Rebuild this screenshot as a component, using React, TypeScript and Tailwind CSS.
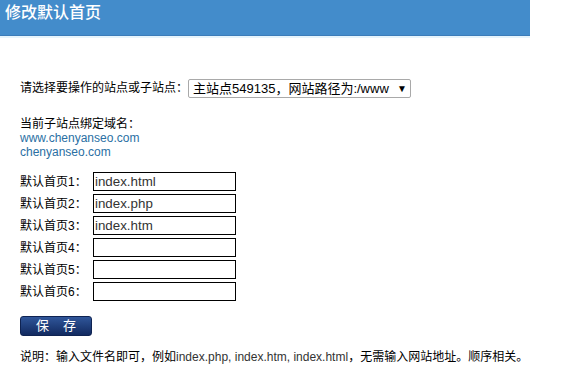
const FONT = '"Liberation Sans", Arial, "Noto Sans CJK SC", sans-serif';

const pages = ['index.html', 'index.php', 'index.htm', '', '', ''];

export default function App() {
  return (
    <div className="w-[564px] h-[385px] bg-white text-[12px] text-black" style={{ fontFamily: FONT }}>
      {/* Title bar */}
      <div className="w-[530px]">
        <div className="h-[36px] bg-[#438ccb] border-b border-[#3b7cb9] pl-[5px] pt-[3px]">
          <h1 className="text-[16px] leading-[20px] text-white font-medium">修改默认首页</h1>
        </div>
        <div className="h-[2px] bg-[#e6f4fc]" />
      </div>

      <div className="pl-[20px]">
        {/* Site selector */}
        <div className="mt-[41px] flex items-center h-[19px]">
          <span className="leading-[19px]">请选择要操作的站点或子站点：</span>
          <div className="w-[223px] h-[19px] border border-[#a9a9a9] rounded-[2px] flex items-center pl-[4px] pr-[3px] text-[13px] leading-[17px]">
            <span className="flex-1 whitespace-nowrap overflow-hidden">主站点549135，网站路径为:/www</span>
            <span className="ml-[4px] text-[10px]">▼</span>
          </div>
        </div>

        {/* Bound domains */}
        <div className="mt-[19px] leading-[14px]">
          <div>当前子站点绑定域名：</div>
          <a className="block text-[#2a6fa3]" href="#">www.chenyanseo.com</a>
          <a className="block text-[#2a6fa3]" href="#">chenyanseo.com</a>
        </div>

        {/* Default pages */}
        <div className="mt-[13px] flex flex-col gap-[3px]">
          {pages.map((p, i) => (
            <div key={i} className="flex items-center h-[19px]">
              <span className="w-[73px]">默认首页{i + 1}：</span>
              <div className="w-[143px] h-[19px] border border-black pl-[1px] text-[13.33px] leading-[17px] text-[#333]">
                {p}
              </div>
            </div>
          ))}
        </div>

        <button className="mt-[15px] w-[72px] h-[20px] rounded-[3px] border border-[#0f2352] bg-gradient-to-b from-[#30569a] to-[#122a60] text-white text-[13px] leading-[18px] flex items-center justify-center gap-[14px]">
          <span>保</span>
          <span>存</span>
        </button>

        <p className="mt-[14px] leading-[14px]">
          说明：输入文件名即可，例如<span className="text-[#333]">index.php, index.htm, index.html</span>，无需输入网站地址。顺序相关。
        </p>
      </div>
    </div>
  );
}
